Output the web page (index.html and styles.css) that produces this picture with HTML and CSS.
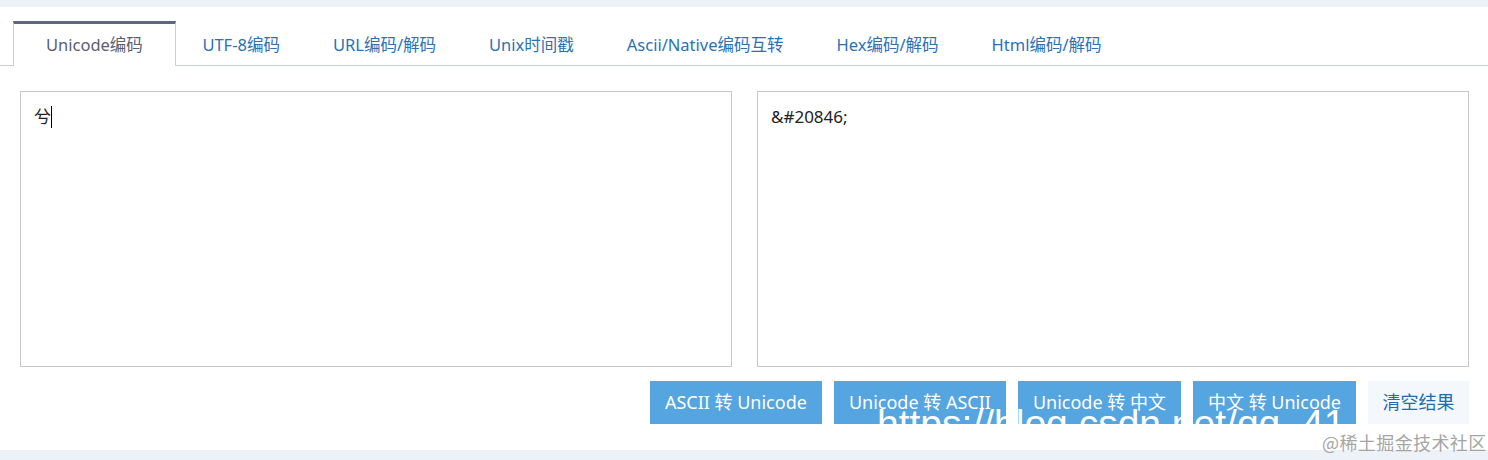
FILE: index.html
```html
<!DOCTYPE html>
<html lang="zh-CN">
<head>
<meta charset="utf-8">
<title>Unicode编码</title>
<link rel="stylesheet" href="styles.css">
</head>
<body>
<div class="topbar"></div>
<main class="page">
  <ul class="tabs">
    <li class="tab active">Unicode编码</li>
    <li class="tab">UTF-8编码</li>
    <li class="tab">URL编码/解码</li>
    <li class="tab">Unix时间戳</li>
    <li class="tab">Ascii/Native编码互转</li>
    <li class="tab">Hex编码/解码</li>
    <li class="tab">Html编码/解码</li>
  </ul>
  <section class="panels">
    <div class="box"><span class="txt">兮</span><span class="caret"></span></div>
    <div class="box"><span class="txt">&amp;#20846;</span></div>
  </section>
  <div class="actions">
    <button class="btn">ASCII 转 Unicode</button>
    <button class="btn">Unicode 转 ASCII</button>
    <button class="btn">Unicode 转 中文</button>
    <button class="btn">中文 转 Unicode</button>
    <button class="btn btn-clear">清空结果</button>
  </div>
</main>
<div class="bottombar"></div>
<div class="wm-url">https://blog.csdn.net/qq_41</div>
<div class="wm-juejin">@稀土掘金技术社区</div>
</body>
</html>
```
FILE: styles.css
```css
* { box-sizing: border-box; }
html, body { margin: 0; padding: 0; }
body {
  width: 1488px;
  height: 460px;
  overflow: hidden;
  background: #fff;
  font-family: "Noto Sans", "Noto Sans CJK SC", sans-serif;
  position: relative;
}
.topbar { height: 7px; background: #edf1f8; }
.bottombar { height: 10px; background: #edf1f8; }
.page { height: 443px; padding-top: 14px; }

.tabs {
  list-style: none;
  margin: 0;
  padding: 0 0 0 13px;
  display: flex;
  height: 45px;
  border-bottom: 1px solid #c9cdd5;
}
.tab {
  height: 45px;
  border-top: 3px solid transparent;
  line-height: 41px;
  font-size: 16.5px;
  color: #2a72b5;
  padding: 0 26.5px;
}
.tab.active {
  color: #5a5f6e;
  border-top-color: #5b6785;
  border-left: 1px solid #c9cdd5;
  border-right: 1px solid #c9cdd5;
  background: #fff;
  padding: 0 32px 0 32px;
  height: 45px;
}

.panels {
  display: grid;
  grid-template-columns: 1fr 1fr;
  gap: 25px;
  padding: 0 19px 0 20px;
  margin-top: 25px;
}
.box {
  height: 276px;
  border: 1px solid #c8c8c8;
  padding: 13px 13px;
  font-size: 17px;
  line-height: 24px;
  color: #222;
  display: flex;
  align-items: flex-start;
}
.caret {
  display: inline-block;
  width: 1px;
  height: 22px;
  margin-top: 1px;
  background: #000;
}

.actions {
  display: flex;
  justify-content: flex-end;
  gap: 12px;
  padding-right: 19px;
  margin-top: 14px;
}
.btn {
  border: 0;
  margin: 0;
  height: 43px;
  line-height: 43px;
  padding: 0 15px;
  background: #55a5e0;
  color: #fff;
  font-family: "Noto Sans", "Noto Sans CJK SC", sans-serif;
  font-size: 18px;
}
.btn-clear {
  background: #f4f8fc;
  color: #1f6db0;
  padding: 0 14.5px;
}

.wm-url {
  position: absolute;
  left: 877px;
  top: 404px;
  font-family: "Liberation Sans", sans-serif;
  font-size: 39px;
  line-height: 39px;
  color: #fff;
  white-space: nowrap;
  pointer-events: none;
}
.wm-juejin {
  position: absolute;
  left: 1322px;
  top: 431px;
  font-family: "Noto Sans CJK SC", sans-serif;
  font-size: 18px;
  letter-spacing: 0.4px;
  line-height: 22px;
  color: #a5a5a5;
  white-space: nowrap;
  pointer-events: none;
}
```
